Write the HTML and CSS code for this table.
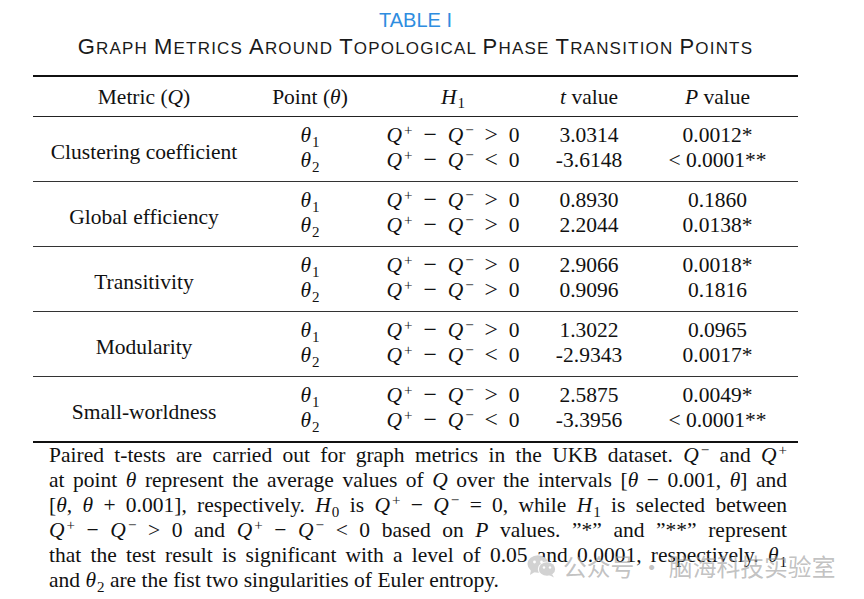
FILE: index.html
```html
<!DOCTYPE html>
<html lang="en">
<head>
  <meta charset="UTF-8" />
  <title>Table I</title>
  <link rel="stylesheet" href="styles.css">
</head>
<body>

  <div class="sheet">
    <div class="title">TABLE I</div>
    <div class="caption"><span class="cap">G</span>RAPH <span class="cap">M</span>ETRICS <span class="cap">A</span>ROUND <span class="cap">T</span>OPOLOGICAL <span class="cap">P</span>HASE <span class="cap">T</span>RANSITION <span class="cap">P</span>OINTS</div>

    <table class="metrics">
      <thead>
        <tr>
          <th class="c-metric">Metric (<i>Q</i>)</th>
          <th class="c-point">Point (<i>θ</i>)</th>
          <th class="c-h"><i>H</i><span class="sub">1</span></th>
          <th class="c-t"><i>t</i> value</th>
          <th class="c-p"><i>P</i> value</th>
        </tr>
      </thead>
      <tbody>
        <tr class="first">
          <td rowspan="2">Clustering coefficient</td>
          <td><i>θ</i><span class="sub">1</span></td>
          <td><i>Q</i><span class="sup">+</span><span class="op">−</span><i>Q</i><span class="sup">−</span><span class="op">&gt;</span>0</td>
          <td>3.0314</td>
          <td>0.0012*</td>
        </tr>
        <tr class="last">
          <td><i>θ</i><span class="sub">2</span></td>
          <td><i>Q</i><span class="sup">+</span><span class="op">−</span><i>Q</i><span class="sup">−</span><span class="op">&lt;</span>0</td>
          <td>-3.6148</td>
          <td>&lt; 0.0001**</td>
        </tr>
      </tbody>
      <tbody>
        <tr class="first">
          <td rowspan="2">Global efficiency</td>
          <td><i>θ</i><span class="sub">1</span></td>
          <td><i>Q</i><span class="sup">+</span><span class="op">−</span><i>Q</i><span class="sup">−</span><span class="op">&gt;</span>0</td>
          <td>0.8930</td>
          <td>0.1860</td>
        </tr>
        <tr class="last">
          <td><i>θ</i><span class="sub">2</span></td>
          <td><i>Q</i><span class="sup">+</span><span class="op">−</span><i>Q</i><span class="sup">−</span><span class="op">&gt;</span>0</td>
          <td>2.2044</td>
          <td>0.0138*</td>
        </tr>
      </tbody>
      <tbody>
        <tr class="first">
          <td rowspan="2">Transitivity</td>
          <td><i>θ</i><span class="sub">1</span></td>
          <td><i>Q</i><span class="sup">+</span><span class="op">−</span><i>Q</i><span class="sup">−</span><span class="op">&gt;</span>0</td>
          <td>2.9066</td>
          <td>0.0018*</td>
        </tr>
        <tr class="last">
          <td><i>θ</i><span class="sub">2</span></td>
          <td><i>Q</i><span class="sup">+</span><span class="op">−</span><i>Q</i><span class="sup">−</span><span class="op">&gt;</span>0</td>
          <td>0.9096</td>
          <td>0.1816</td>
        </tr>
      </tbody>
      <tbody>
        <tr class="first">
          <td rowspan="2">Modularity</td>
          <td><i>θ</i><span class="sub">1</span></td>
          <td><i>Q</i><span class="sup">+</span><span class="op">−</span><i>Q</i><span class="sup">−</span><span class="op">&gt;</span>0</td>
          <td>1.3022</td>
          <td>0.0965</td>
        </tr>
        <tr class="last">
          <td><i>θ</i><span class="sub">2</span></td>
          <td><i>Q</i><span class="sup">+</span><span class="op">−</span><i>Q</i><span class="sup">−</span><span class="op">&lt;</span>0</td>
          <td>-2.9343</td>
          <td>0.0017*</td>
        </tr>
      </tbody>
      <tbody class="end">
        <tr class="first">
          <td rowspan="2">Small-worldness</td>
          <td><i>θ</i><span class="sub">1</span></td>
          <td><i>Q</i><span class="sup">+</span><span class="op">−</span><i>Q</i><span class="sup">−</span><span class="op">&gt;</span>0</td>
          <td>2.5875</td>
          <td>0.0049*</td>
        </tr>
        <tr class="last">
          <td><i>θ</i><span class="sub">2</span></td>
          <td><i>Q</i><span class="sup">+</span><span class="op">−</span><i>Q</i><span class="sup">−</span><span class="op">&lt;</span>0</td>
          <td>-3.3956</td>
          <td>&lt; 0.0001**</td>
        </tr>
      </tbody>
    </table>

    <div class="note">
      <span class="line">Paired t-tests are carried out for graph metrics in the UKB dataset. <i>Q</i><span class="sup">−</span> and <i>Q</i><span class="sup">+</span></span>
      <span class="line">at point <i>θ</i> represent the average values of <i>Q</i> over the intervals [<i>θ</i> − 0.001, <i>θ</i>] and</span>
      <span class="line">[<i>θ</i>, <i>θ</i> + 0.001], respectively. <i>H</i><span class="sub">0</span> is <i>Q</i><span class="sup">+</span> − <i>Q</i><span class="sup">−</span> = 0, while <i>H</i><span class="sub">1</span> is selected between</span>
      <span class="line"><i>Q</i><span class="sup">+</span> − <i>Q</i><span class="sup">−</span> &gt; 0 and <i>Q</i><span class="sup">+</span> − <i>Q</i><span class="sup">−</span> &lt; 0 based on <i>P</i> values. ”*” and ”**” represent</span>
      <span class="line">that the test result is significant with a level of 0.05 and 0.0001, respectively. <i>θ</i><span class="sub">1</span></span>
      <span class="line last">and <i>θ</i><span class="sub">2</span> are the fist two singularities of Euler entropy.</span>
    </div>
  </div>

  <div class="watermark">
    <svg class="wx" width="30" height="24" viewBox="0 0 30 24">
      <ellipse cx="11" cy="10" rx="10.5" ry="8.8" fill="#d2d2d2"/>
      <path d="M4 16 L3 21 L8.5 17.5 Z" fill="#d2d2d2"/>
      <circle cx="7.5" cy="8" r="1.4" fill="#fff"/>
      <circle cx="14.5" cy="8" r="1.4" fill="#fff"/>
      <ellipse cx="20" cy="15" rx="9.2" ry="7.6" fill="#fff"/>
      <ellipse cx="20" cy="15" rx="8.2" ry="6.8" fill="#d2d2d2"/>
      <path d="M25 20 L27 23.5 L22 21 Z" fill="#d2d2d2"/>
      <circle cx="17" cy="13.5" r="1.2" fill="#fff"/>
      <circle cx="23" cy="13.5" r="1.2" fill="#fff"/>
    </svg>
    <span>公众号 · 脑海科技实验室</span>
  </div>

</body>
</html>
```

FILE: styles.css
```css
body {
  margin: 0;
  background: #fff;
  color: #111;
  font-family: "Liberation Serif", "Times New Roman", serif;
}
.sheet {
  width: 765px;
  margin-left: 33px;
  padding-top: 8px;
}
.title {
  text-align: center;
  font-family: "Liberation Sans", Arial, sans-serif;
  font-size: 20px;
  line-height: 24px;
  color: #2e8de0;
}
.caption {
  text-align: center;
  font-family: "Liberation Sans", Arial, sans-serif;
  font-size: 17px;
  letter-spacing: 1.2px;
  line-height: 30px;
  color: #1a1a1a;
}
.caption .cap {
  font-size: 22px;
}
.metrics {
  width: 765px;
  margin-top: 11px;
  border-collapse: collapse;
  font-size: 21.5px;
  table-layout: fixed;
}
.metrics th {
  font-weight: normal;
  height: 38px;
  padding: 1px 0 0;
  line-height: 25px;
  border-top: 2px solid #111;
  border-bottom: 1px solid #222;
}
.metrics td {
  padding: 0;
  height: 25px;
  line-height: 25px;
  text-align: center;
}
.metrics tr.first td {
  padding-top: 6px;
}
.metrics tr.last td {
  padding-bottom: 8px;
}
.metrics td[rowspan] {
  padding-top: 0;
  vertical-align: middle;
}
.metrics tbody {
  border-bottom: 1px solid #333;
}
.metrics tbody.end {
  border-bottom: 2px solid #111;
}
.c-metric { width: 222px; }
.c-point { width: 110px; }
.c-h { width: 176px; }
.c-t { width: 96px; }
.c-p { width: 161px; }
.op {
  font-size: 1.1em;
  line-height: 0;
  margin: 0 0.46em;
}
.sub {
  font-size: 0.7em;
  line-height: 0;
  position: relative;
  top: 0.3em;
  margin-left: 1px;
}
.sup {
  font-size: 0.7em;
  line-height: 0;
  position: relative;
  top: -0.45em;
  margin-left: 2px;
}
.note {
  width: 738px;
  margin-left: 16px;
  font-size: 21.5px;
  line-height: 25px;
}
.note .line {
  display: block;
  text-align: justify;
  text-align-last: justify;
}
.note .line.last {
  text-align-last: left;
}
.watermark {
  position: absolute;
  left: 527px;
  top: 548px;
  display: flex;
  align-items: center;
  gap: 6px;
  font-family: "Noto Sans CJK SC", sans-serif;
  font-size: 23.8px;
  color: rgba(160, 160, 160, 0.65);
}
```
